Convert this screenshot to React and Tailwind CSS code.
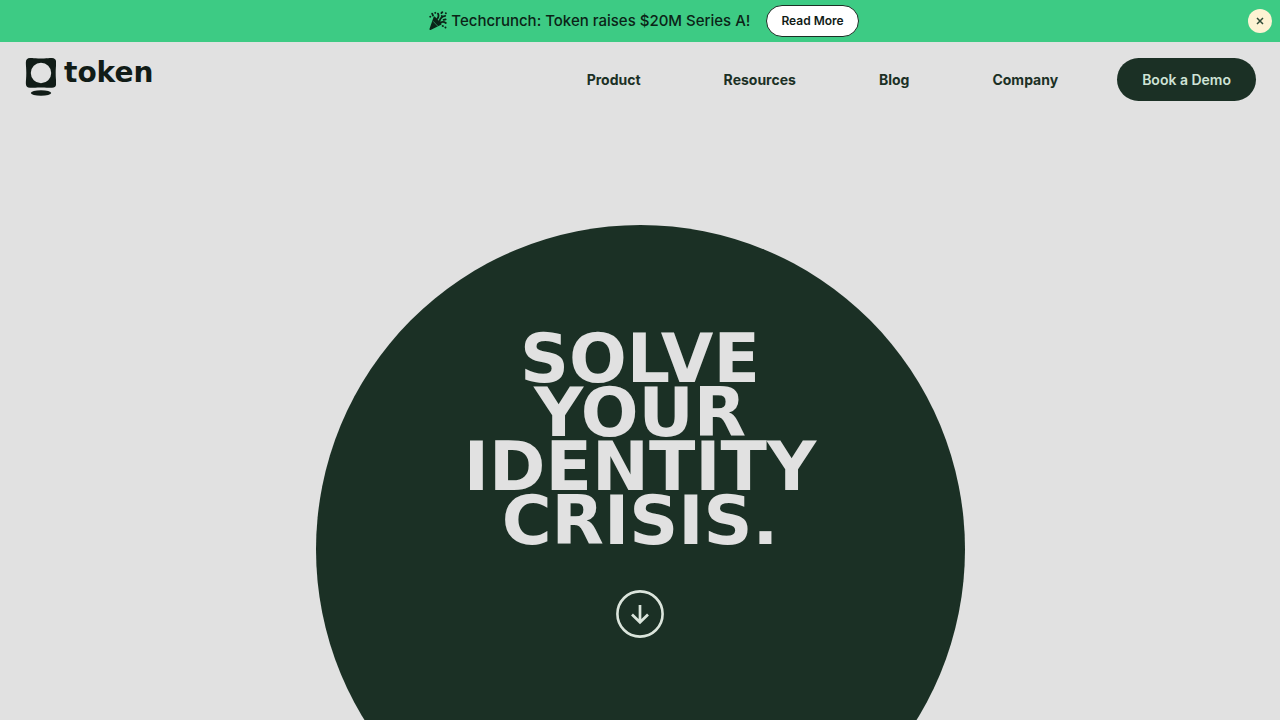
import { useState } from "react";

const links = ["Product", "Resources", "Blog", "Company"];

function PartyIcon() {
  return (
    <svg aria-hidden="true" viewBox="0 0 18 20" className="w-[18px] h-5 shrink-0" fill="none" stroke="currentColor" strokeLinecap="round">
      <path d="M5.4 6.2 11.8 13 1.2 18.2Z" fill="currentColor" strokeWidth="1.6" strokeLinejoin="round" />
      <path d="M4.4 10.6l4.4 4.6" stroke="#3dcb84" strokeWidth="0.6" />
      <path d="M8.2 7.8c1.6-1.6 1.7-3.2.8-5.2M10.6 10c.6-3 2.6-4.6 5.6-5.2M11.6 11.6c1.8-1.2 3.4-1 5.2.4" strokeWidth="1.8" />
      <path d="M3.2 2.6l.8 2M6.2 1.8l.1.1M1.2 5.6l.2.1M12.4 2.2l.9-1M12.8 5l.1.1M16.8 2.2l.1.1M14.6 8.8l2-.5M13.6 15l.4.1M16.4 16.4l.1.1" strokeWidth="1.8" />
    </svg>
  );
}

function Logo() {
  return (
    <a href="#" className="flex items-start gap-2 text-[#111c17]">
      <svg aria-hidden="true" viewBox="-1 1 32 40" className="w-8 h-10" fill="currentColor">
        <path
          fillRule="evenodd"
          d="M5 1C8 .8 10 1.5 16 1.5S24 .8 27 1c2.8.2 4 1.5 4.1 4C31.300 8 30.700 10 30.700 16s.6 8 .4 11c-.1 2.500-1.300 3.600-4.100 3.800C24 31 22 30.500 16 30.500S8 31 5 30.800C2.200 30.600 1 29.500.9 27 .7 24 1.300 22 1.300 16S.7 8 .9 5C1 2.500 2.200 1.200 5 1ZM16 5.800a10.200 10.200 0 1 0 0 20.400 10.200 10.200 0 0 0 0-20.400Z"
        />
        <ellipse cx="16" cy="36" rx="10.2" ry="2.8" />
      </svg>
      <span className="font-['DejaVu_Sans'] text-[28px] leading-[30px] font-bold">token</span>
    </a>
  );
}

function App() {
  const [showBanner, setShowBanner] = useState(true);

  return (
    <div className="min-h-screen overflow-hidden bg-[#e1e1e1] font-['Inter',sans-serif] text-[#1b3025]">
      {showBanner && (
        <div className="flex items-center bg-[#3dcb84] px-2 py-[5px]">
          <div className="flex flex-1 items-center justify-center gap-4 pl-8">
            <p className="flex items-center gap-1 text-[15px] font-medium text-[#0b2417]">
              <PartyIcon />
              Techcrunch: Token raises $20M Series A!
            </p>
            <a href="#" className="flex h-8 items-center rounded-full border border-[#1b3025] bg-white px-[14px] text-xs font-semibold text-[#111c17]">
              Read More
            </a>
          </div>
          <button
            aria-label="Close"
            className="flex size-6 items-center justify-center rounded-full bg-[#fdf3d3]"
            onClick={() => setShowBanner(false)}
          >
            <svg aria-hidden="true" viewBox="0 0 8 8" className="size-2" stroke="#2f4a35" strokeWidth="1.5">
              <path d="M1 1l6 6M7 1 1 7" />
            </svg>
          </button>
        </div>
      )}

      <header className="flex items-start justify-between px-6 pt-4">
        <Logo />
        <div className="flex items-center gap-[59px]">
          <nav className="flex items-center gap-[83px] text-sm font-bold">
            {links.map((link) => (
              <a key={link} href="#">
                {link}
              </a>
            ))}
          </nav>
          <a href="#" className="flex h-[43px] items-center rounded-full bg-[#1b3025] px-[25px] text-sm font-semibold text-[#cfe3d6]">
            Book a Demo
          </a>
        </div>
      </header>

      <main className="flex justify-center pt-[124px]">
        <section className="flex aspect-square w-[649px] max-w-full flex-col items-center rounded-full bg-[#1b3025] pt-[107px] text-[#e1e1e1]">
          <h1 className="text-center font-['DejaVu_Sans',sans-serif] text-[68px] leading-[54px] font-bold uppercase">
            Solve
            <br />
            Your
            <br />
            Identity
            <br />
            Crisis.
          </h1>
          <a href="#" aria-label="Scroll down" className="mt-[42px]">
            <svg aria-hidden="true" viewBox="0 0 48 48" className="size-12" fill="none" stroke="#dbe5dc">
              <circle cx="24" cy="24" r="22.6" strokeWidth="2.6" />
              <path d="M24 15v17M16 24.5l8 7.8 8-7.8" strokeWidth="2.7" />
            </svg>
          </a>
        </section>
      </main>
    </div>
  );
}

export default App;
